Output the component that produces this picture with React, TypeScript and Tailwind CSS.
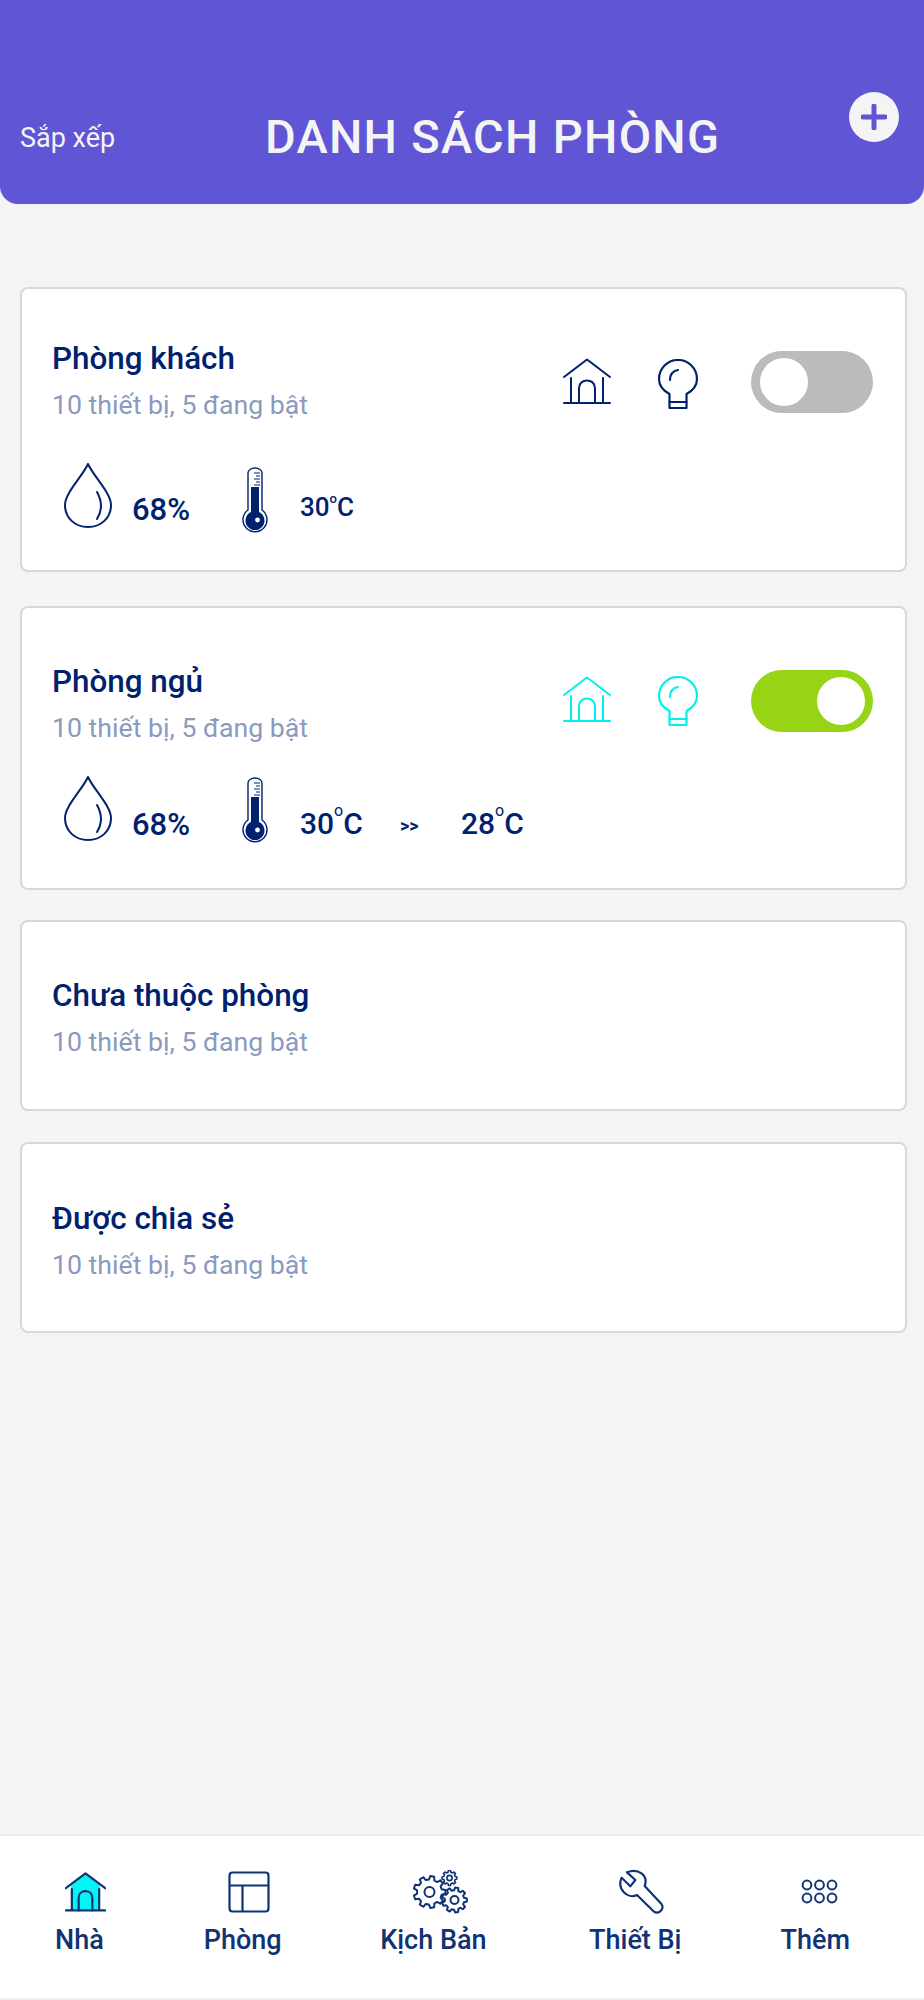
import React from "react";

const navy = "#00216e";

function HomeIcon({ color = navy, fill = "none", sw = 2, size = 48 }: { color?: string; fill?: string; sw?: number; size?: number }) {
  return (
    <svg width={size} height={size} viewBox="0 0 48 48" fill="none" stroke={color} strokeWidth={sw} strokeLinecap="round" strokeLinejoin="round" className="shrink-0">
      {fill !== "none" && <path d="M24 2 L41 16 V44 H7 V16 Z" fill={fill} stroke="none" />}
      <path d="M1 19 L24 1.5 L47 19" />
      <path d="M8 20 V45 M40 20 V45 M1 45 H47" />
      <path d="M16 45 V30 C16 20 32 20 32 30 V45" />
    </svg>
  );
}

function Bulb({ color = navy }: { color?: string }) {
  return (
    <svg width="42" height="51" viewBox="0 0 42 51" fill="none" stroke={color} strokeWidth="2.2" strokeLinejoin="round" strokeLinecap="round">
      <path d="M12.5 49 V35 C6 31.5 2 26 2 20 A19 19 0 0 1 40 20 C40 26 36 31.5 29.5 35 V49 Z" />
      <path d="M12.5 43 H29.5" />
      <path d="M13 21 C13 15 16 12 21 11" />
    </svg>
  );
}

function Toggle({ on }: { on: boolean }) {
  return (
    <div className={`flex h-[62px] w-[122px] items-center rounded-full ${on ? "justify-end bg-[#97d416] pr-[8px]" : "justify-start bg-[#bbbbbb] pl-[9px]"}`}>
      <div className="h-[48px] w-[48px] rounded-full bg-white" />
    </div>
  );
}

function Drop() {
  return (
    <svg width="48" height="66" viewBox="0 0 48 66" fill="none" stroke={navy} strokeWidth="2" strokeLinecap="round" strokeLinejoin="round" className="shrink-0">
      <path d="M24 1 C18 14 1 30 1 42 C1 55 11 64 24 64 C37 64 47 55 47 42 C47 30 30 14 24 1 Z" />
      <path d="M33 29 C38 38 38 48 33 56" />
    </svg>
  );
}

function Thermo() {
  return (
    <svg width="26" height="66" viewBox="0 0 26 66" fill="none" className="shrink-0">
      <path d="M6 43 V6 A7 5 0 0 1 20 6 V43 A12 12 0 1 1 6 43 Z" stroke={navy} strokeWidth="1.4" fill="white" />
      <path d="M9 45 V20 H17 V45 A9.5 9.5 0 1 1 9 45 Z" fill={navy} />
      <circle cx="15.5" cy="53" r="2.4" fill="white" />
      <path d="M12 6 H18 M14 9 H18 M12 12 H18 M14 15 H18 M12 18 H18" stroke={navy} strokeWidth="1" />
    </svg>
  );
}

function Temp({ value, big }: { value: string; big?: boolean }) {
  return (
    <span className={`font-medium text-[#00216e] ${big ? "text-[30px]" : "text-[26px]"}`}>
      {value}
      <span className={`${big ? "text-[16px] align-[18px] font-normal" : "text-[13px] align-[13px]"} leading-none`}>o</span>C
    </span>
  );
}

function Heading({ title }: { title: string }) {
  return (
    <div>
      <div className="h-[36px] text-[31.4px] font-medium leading-[36px] text-[#00216e]">{title}</div>
      <div className="mt-[12px] h-[32px] text-[26.7px] leading-[32px] text-[#8a9abf]">10 thiết bị, 5 đang bật</div>
    </div>
  );
}

function gearPath(cx: number, cy: number, r: number, teeth: number) {
  const out: string[] = [];
  const R = r;
  const r2 = r * 0.78;
  const step = (Math.PI * 2) / teeth;
  for (let i = 0; i < teeth; i++) {
    const a = i * step;
    const pts: [number, number][] = [
      [r2, a - step * 0.32],
      [R, a - step * 0.18],
      [R, a + step * 0.18],
      [r2, a + step * 0.32],
    ];
    pts.forEach(([m, t]) => {
      const x = (cx + m * Math.cos(t)).toFixed(2);
      const y = (cy + m * Math.sin(t)).toFixed(2);
      out.push(`${out.length === 0 ? "M" : "L"}${x} ${y}`);
    });
  }
  return out.join(" ") + " Z";
}

function Gears() {
  return (
    <svg width="56" height="44" viewBox="0 0 56 44" fill="none" stroke="#0f3375" strokeWidth="2" strokeLinejoin="round" className="shrink-0">
      <path d={gearPath(17, 22, 16, 9)} />
      <circle cx="17" cy="22" r="5" />
      <path d={gearPath(37, 8, 7.5, 8)} fill="white" strokeWidth="1.6" />
      <circle cx="37" cy="8" r="2.6" strokeWidth="1.6" />
      <path d={gearPath(42, 30, 12.5, 9)} fill="white" />
      <circle cx="42" cy="30" r="4" />
    </svg>
  );
}

function Wrench() {
  return (
    <svg width="46" height="46" viewBox="470 146 138 138" fill="none" stroke="#0f3375" strokeWidth="6.5" strokeLinejoin="round" strokeLinecap="round" className="shrink-0">
      <path d="M497 156 L522 179 L507 198 L481 172 C466 205 498 238 527 224 L578 274 C590 283 610 268 601 252 L550 197 C562 165 530 142 497 156 Z" />
    </svg>
  );
}

function LayoutIcon() {
  return (
    <svg width="42" height="42" viewBox="0 0 42 42" fill="none" stroke="#0f3375" strokeWidth="2.2" strokeLinejoin="round" className="shrink-0">
      <rect x="1.5" y="1.5" width="39" height="39" rx="3" />
      <path d="M1.5 14.5 H40.5 M14.5 14.5 V40.5" />
    </svg>
  );
}

function Dots() {
  const xs = [6, 18.5, 31];
  const ys = [6, 19];
  return (
    <svg width="38" height="26" viewBox="0 0 38 26" fill="none" stroke="#0f3375" strokeWidth="2" className="shrink-0">
      {ys.map((y) => xs.map((x) => <circle key={`${x}-${y}`} cx={x} cy={y} r="4.4" />))}
    </svg>
  );
}

function NavItem({ label, shift, extra = "", children }: { label: string; shift: string; extra?: string; children: React.ReactNode }) {
  return (
    <div className={`flex flex-col items-center ${extra}`}>
      <div className={`flex h-[46px] w-0 items-center justify-center ${shift}`}>{children}</div>
      <div className="mt-[9px] text-[27px] font-medium leading-[32px] text-[#0f3375] whitespace-nowrap">{label}</div>
    </div>
  );
}

export default function App() {
  return (
    <div className="flex h-[2000px] w-[924px] flex-col overflow-hidden bg-[#f4f4f4] font-['Roboto',sans-serif]">
      <header className="relative flex h-[204px] shrink-0 items-end rounded-b-[18px] bg-[#5f55d5] pb-[41px] pl-[20px] text-white">
        <span className="mb-[8px] w-[245px] text-[27px] leading-[34px] text-[#f4f4f4]">Sắp xếp</span>
        <span className="text-[47px] font-medium leading-[52px] tracking-[1.3px] text-[#f4f4f4]">DANH SÁCH PHÒNG</span>
        <div className="absolute left-[849px] top-[92px] flex h-[50px] w-[50px] items-center justify-center rounded-full bg-[#f4f4f4]">
          <svg width="26" height="26" viewBox="0 0 26 26" stroke="#5f55d5" strokeWidth="5" strokeLinecap="round">
            <path d="M13 2 V24 M2 13 H24" />
          </svg>
        </div>
      </header>

      <main className="flex flex-col pl-[20px] pr-[17px]">
        <section className="mt-[83px] h-[285px] rounded-[8px] border-2 border-[#d8d8d8] bg-white pl-[30px] pr-[32px]">
          <div className="flex items-start justify-between pt-[52px]">
            <Heading title="Phòng khách" />
            <div className="mt-[10px] flex items-center">
              <div className="mr-[46px]"><HomeIcon /></div>
              <div className="mr-[52px] mt-[4px]"><Bulb /></div>
              <Toggle on={false} />
            </div>
          </div>
          <div className="mt-[42px] flex items-center">
            <div className="ml-[12px] w-[68px]"><Drop /></div>
            <span className="w-[110px] translate-y-[14px] text-[31px] font-medium leading-[36px] text-[#00216e]">68%</span>
            <div className="w-[58px] translate-y-[4px]"><Thermo /></div>
            <div className="translate-y-[11px]"><Temp value="30" /></div>
          </div>
        </section>

        <section className="mt-[34px] h-[284px] rounded-[8px] border-2 border-[#d8d8d8] bg-white pl-[30px] pr-[32px]">
          <div className="flex items-start justify-between pt-[56px]">
            <Heading title="Phòng ngủ" />
            <div className="mt-[6px] flex items-center">
              <div className="mr-[46px] mt-[-2px]"><HomeIcon color="#00f0f0" /></div>
              <div className="mr-[52px]"><Bulb color="#00f0f0" /></div>
              <Toggle on />
            </div>
          </div>
          <div className="mt-[32px] flex items-center">
            <div className="ml-[12px] w-[68px]"><Drop /></div>
            <span className="w-[110px] translate-y-[16px] text-[31px] font-medium leading-[36px] text-[#00216e]">68%</span>
            <div className="w-[58px] translate-y-[1px]"><Thermo /></div>
            <div className="flex translate-y-[14px] items-center">
              <div className="w-[100px]"><Temp value="30" big /></div>
              <span className="w-[61px] translate-y-[2px] text-[18px] font-bold text-[#00216e]">&gt;&gt;</span>
              <Temp value="28" big />
            </div>
          </div>
        </section>

        <section className="mt-[30px] h-[191px] rounded-[8px] border-2 border-[#d8d8d8] bg-white pl-[30px] pt-[56px]">
          <Heading title="Chưa thuộc phòng" />
        </section>

        <section className="mt-[31px] h-[191px] rounded-[8px] border-2 border-[#d8d8d8] bg-white pl-[30px] pt-[57px]">
          <Heading title="Được chia sẻ" />
        </section>
      </main>

      <nav className="mt-auto flex h-[164px] items-start justify-between border-b-2 border-[#f0f0f0] bg-white pl-[55px] pr-[74px] pt-[33px] shadow-[0_-1px_2px_rgba(0,0,0,0.05)]">
        <NavItem label="Nhà" shift="translate-x-[6px]"><HomeIcon color="#0f3375" fill="#00f5f5" sw={2.6} size={41} /></NavItem>
        <NavItem label="Phòng" shift="translate-x-[6px]"><LayoutIcon /></NavItem>
        <NavItem label="Kịch Bản" shift="translate-x-[7px]" extra="-translate-x-[1.5px]"><Gears /></NavItem>
        <NavItem label="Thiết Bị" shift="translate-x-[6px]" extra="translate-x-[1px]"><Wrench /></NavItem>
        <NavItem label="Thêm" shift="translate-x-[5px]"><Dots /></NavItem>
      </nav>
    </div>
  );
}
